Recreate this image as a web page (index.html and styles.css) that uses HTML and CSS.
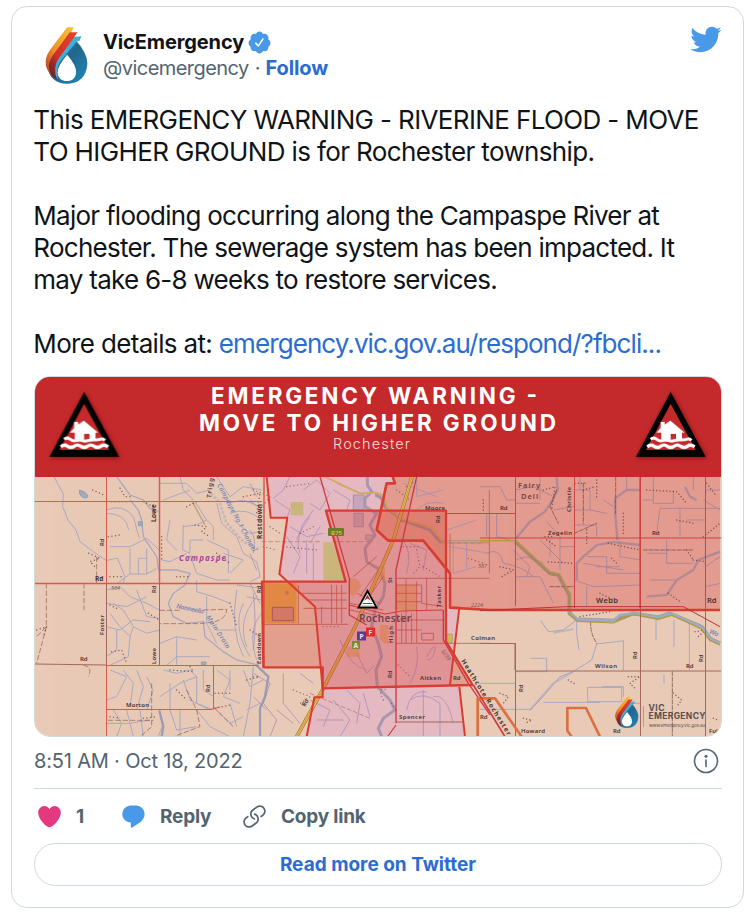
FILE: index.html
```html
<!DOCTYPE html>
<html lang="en">
<head>
<meta charset="utf-8">
<title>VicEmergency</title>
<link rel="stylesheet" href="styles.css">
</head>
<body>
<article class="card">
  <header class="head">
    <svg class="avatar" viewBox="130 72 145 185">
      <defs>
        <linearGradient id="blue" x1="0" y1="0" x2="1" y2="1"><stop offset="0" stop-color="#3ba5d0"/><stop offset=".45" stop-color="#23658c"/><stop offset="1" stop-color="#1c8abb"/></linearGradient>
        <linearGradient id="yel" x1="1" y1="0" x2="0" y2="1"><stop offset="0" stop-color="#f6c433"/><stop offset=".6" stop-color="#ef8f2c"/><stop offset="1" stop-color="#a8391f"/></linearGradient>
        <linearGradient id="red" x1="1" y1="0" x2="0" y2="1"><stop offset="0" stop-color="#e7442c"/><stop offset=".6" stop-color="#cf3027"/><stop offset="1" stop-color="#4b2130"/></linearGradient>
        <symbol id="drop" viewBox="130 72 145 185">
          <path fill="url(#blue)" d="M229 120Q264 158 264 190C262 232 237 251 202 251C168 251 146 230 146 202L185 140Z"/>
          <path fill="#42add8" d="M219 110L246 108L240 122L232 124L192 172Q166 196 175 238Q154 215 160 184Z"/>
          <path fill="url(#yel)" d="M203 81H223L216 95L168 162Q149 190 156 228Q138 208 138 186Q138 168 152 148Z"/>
          <path fill="url(#red)" d="M211 96H234L226 108L178 174Q159 200 172 240Q148 226 148 198Q148 182 160 165Z"/>
          <path fill="#fff" d="M203 164Q232 198 230 218C228 235 218 243 202 243S176 235 174 218Q173 199 203 164Z"/>
        </symbol>
        <symbol id="flood" viewBox="0 0 210 200">
          <path d="M104 2L209 197H0Z"/>
          <path fill="#c4292b" d="M104 38L179 176H30Z"/>
          <path fill="#fff" d="M61 124L74 111V92H86V100L103 88L146 124H138V145H120V128H104V145H76V124Z"/>
          <path fill="none" stroke="#fff" stroke-width="9" d="M44 144q9-7 18 0t18 4 18 0 18 0 18-2 18-2 14 4"/>
          <path fill="none" stroke="#fff" stroke-width="10" d="M34 167q10-9 20-2t20 0 20 0 20 0 20 0 20 0 22 2"/>
        </symbol>
      </defs>
      <use href="#drop" x="130" y="72" width="145" height="185"/>
    </svg>
    <div class="who">
      <div class="name"><b>VicEmergency</b><svg class="badge" viewBox="0 0 24 24"><path d="M22.5 12.5c0-1.58-.875-2.95-2.148-3.6.154-.435.238-.905.238-1.4 0-2.21-1.71-3.998-3.818-3.998-.47 0-.92.084-1.336.25C14.818 2.415 13.51 1.5 12 1.5s-2.816.917-3.437 2.25c-.415-.165-.866-.25-1.336-.25-2.11 0-3.818 1.79-3.818 4 0 .494.083.964.237 1.4-1.272.65-2.147 2.018-2.147 3.6 0 1.495.782 2.798 1.942 3.486-.02.17-.032.34-.032.514 0 2.21 1.708 4 3.818 4 .47 0 .92-.086 1.335-.25.62 1.334 1.926 2.25 3.437 2.25 1.512 0 2.818-.916 3.437-2.25.415.163.865.248 1.336.248 2.11 0 3.818-1.79 3.818-4 0-.174-.012-.344-.033-.513 1.158-.687 1.943-1.99 1.943-3.484zm-6.616-3.334l-4.334 6.5c-.145.217-.382.334-.625.334-.143 0-.288-.04-.416-.126l-.115-.094-2.415-2.415c-.293-.293-.293-.768 0-1.06s.768-.294 1.06 0l1.77 1.767 3.825-5.74c.23-.345.696-.436 1.04-.207.346.23.44.696.21 1.04z"/></svg></div>
      <div class="handle"><span class="at">@vicemergency</span><span class="dot">·</span><b class="follow">Follow</b></div>
    </div>
    <svg class="bird" viewBox="0 0 24 24"><path d="M23.643 4.937c-.835.37-1.732.62-2.675.733.962-.576 1.7-1.49 2.048-2.578-.9.534-1.897.922-2.958 1.13-.85-.904-2.06-1.47-3.4-1.47-2.572 0-4.658 2.086-4.658 4.66 0 .364.042.718.12 1.06-3.873-.195-7.304-2.05-9.602-4.868-.4.69-.63 1.49-.63 2.342 0 1.616.823 3.043 2.072 3.878-.764-.025-1.482-.234-2.11-.583v.06c0 2.257 1.605 4.14 3.737 4.568-.392.106-.803.162-1.227.162-.3 0-.593-.028-.877-.082.593 1.85 2.313 3.198 4.352 3.234-1.595 1.25-3.604 1.995-5.786 1.995-.376 0-.747-.022-1.112-.065 2.062 1.323 4.51 2.093 7.14 2.093 8.57 0 13.255-7.098 13.255-13.254 0-.2-.005-.402-.014-.602.91-.658 1.7-1.477 2.323-2.41z"/></svg>
  </header>

  <div class="text">
    <p><span class="l1">This EMERGENCY WARNING - RIVERINE FLOOD - MOVE</span><br><span class="l1">TO HIGHER GROUND is for Rochester township.</span></p>
    <p><span class="l3">Major flooding occurring along the Campaspe River at</span><br><span class="l3">Rochester. The sewerage system has been impacted. It</span><br><span class="l3">may take 6-8 weeks to restore services.</span></p>
    <p><span class="l6">More details at: </span><a class="l7">emergency.vic.gov.au/respond/?fbcli...</a></p>
  </div>

  <svg class="photo" viewBox="35 377 686 359">
    <rect x="35" y="377" width="686" height="359" fill="#e8cab7"/>

    <!-- shaded warning areas -->
    <g transform="translate(250 470) scale(.33333)">
      <path fill="#e5b9c2" d="M50 20L62 143H112L88 312L195 410L218 655V682H193L170 800H645L628 650L600 645L628 413H600V310L520 212H415L380 180L410 40H435L428 20Z"/>
      <path fill="#db3c3c" fill-opacity=".32" d="M428 20L435 40H410L380 180L415 212H520L600 310V413L720 420H1410V20Z"/>
      <path fill="#c3b46b" fill-opacity=".8" d="M122 96H160V136H122ZM220 217H247L287 330H220Z"/>
    </g>

    <!-- creeks, drains and farm tracks, west -->
    <g transform="translate(30 470) scale(.33333)" fill="none" stroke="#989fc3" stroke-width="3" opacity=".78">
      <path d="M72 20L100 72L98 110L114 150L138 180L150 215L190 245L229 272L262 264L285 320L280 340M229 120Q280 100 310 140L328 205M229 130Q290 130 296 180M240 230H300L350 205L388 240M300 235V312H350V235M325 265V310M325 265H350M300 312L262 340M350 312L380 296"/>
      <path d="M260 20L300 75L340 90L360 115L385 125M300 90L325 120L335 150L340 200L380 260L386 300L440 300L480 310L465 345L430 370L415 400L430 440L470 460L520 455L525 500L580 545L620 570L688 586" stroke-width="4"/>
      <path d="M390 40H470L500 70L540 60M400 90L480 60M450 20L460 60L490 90M460 165L458 240L480 250V210L520 210M495 95L530 150L500 165L460 170M530 150L550 170V210M560 100L575 160L620 200L640 250L680 275L690 320L660 335M590 100L640 90L690 110M600 130Q650 110 695 150M610 150L660 190L695 185M560 20L600 80L640 50L695 60M470 250L420 275L395 270M480 255L500 310L560 330H600M580 250L640 270L600 310M500 330V365L550 380L600 400M530 210L595 240V310M420 150L410 210L440 240"/>
      <path d="M229 360L270 350L300 380L350 400L388 420M229 400L290 410L350 380M240 430L270 470L300 500L310 470L280 420L250 400M229 470L270 480L310 450L360 455M310 470L350 490L388 480M300 500L295 560L240 586M260 480V540L229 560M320 360L350 440L388 445M390 520L440 500L500 510M410 586L440 560H540M440 500V586M530 380V460L560 520M560 480H620M620 360Q600 480 640 560M640 400Q605 470 660 560M680 380Q620 450 650 530M695 430Q650 480 680 570M620 345L695 355M650 380L695 390"/>
      <path d="M240 600L290 620L260 680L229 690M280 600L310 640L300 710M320 600L340 650L320 720M350 620L370 660L350 720M250 720L275 760L260 800M290 720L310 800M330 720L340 800M388 720L400 760L385 800M400 600L440 610L480 600L500 620L450 640L390 680M420 640V720M460 630L480 690L540 720M500 620V700L551 720M520 600V660L551 680M560 600L600 630L580 680L630 700M600 600V660M640 600L660 650L700 630M670 590L660 700L640 800M690 700L650 720M500 720L540 770L600 800M420 720L440 780L500 770M560 720L600 760L640 740M229 760H300L360 750M450 720V800M600 700L620 770" stroke-width="3"/>
      <path stroke="#8990b5" stroke-width="7" d="M388 722L400 770L395 800M680 586L715 620L705 680L690 715V800"/>
      <path stroke="#6c82c0" stroke-width="8" stroke-dasharray="8 5" d="M535 60L570 100L590 160L640 215L690 240" opacity=".35"/>
      <path fill="#8fa3b9" stroke="#7f93b0" d="M148 60Q170 65 174 80Q165 90 150 75ZM325 155h12v12h-12ZM514 576h14v8h-14Z"/>
      <path stroke="#a8763d" stroke-width="4" d="M485 92L525 165" opacity=".7"/>
    </g>
    <g transform="translate(30 470) scale(.33333)" fill="none" stroke="#8c5141" stroke-width="2.5" stroke-dasharray="16 6" opacity=".75">
      <path d="M49 340V470L20 500M49 470L20 580M162 340V420M389 421H450M520 420L590 418Q590 445 555 455L510 461H389M200 260V340M160 586Q190 590 175 620M365 640V770L330 800M470 660L500 720L510 770L430 800M551 712L610 770M234 751H370"/>
    </g>
    <!-- homesteads -->
    <g transform="translate(30 470) scale(.33333)" fill="none" stroke="#6b3d30" stroke-width="4.5" stroke-linecap="round" stroke-dasharray="0 11" opacity=".75">
      <path d="M245 95H300M188 60L222 75M176 250L210 265L180 275L200 295M235 200L270 195M270 55L285 80L305 80M240 320H280M245 545L275 540L290 580M340 95L370 110L378 150M355 430L388 450M395 200V270M420 600L490 605L480 590M440 320H480M495 165L530 170L515 185L540 200M20 480L50 470L40 500M560 250L600 280M600 400L620 470M555 670L610 670M555 715L600 705M240 740L270 745M340 745L380 740M650 630L690 620M640 80L690 70L680 130M660 480L690 500M440 660L470 690M240 405L260 415M470 110L500 95"/>
    </g>

    <!-- east side features -->
    <g transform="translate(480 470) scale(.33333)" fill="none" stroke="#a2809a" stroke-width="3" opacity=".8">
      <path stroke-width="7" stroke="#a68494" d="M230 20L233 60L215 95L195 125L150 155L108 205M480 60H440L405 85V120L412 210M480 225L400 216L350 225L310 260L290 280V330M500 380L560 375L590 330L640 300L655 270L720 245M615 50L630 80L650 90"/>
      <path d="M0 50H60L80 90H106M20 130V200M50 130V200L90 210M106 60L160 50L220 80M106 100H180M180 20V90M220 120L280 110M200 155L240 200M283 60H330V120L380 130M300 20V60M330 120H283M370 90L400 110M320 260H380V310M310 280L430 300M283 165H350V200M380 310H480M420 216V260L480 270M440 60V20M520 20V100H580V60M540 115H600V200M540 115L530 190M600 115H720M620 150H676M676 60H720M490 90H520M560 210V280H640M500 250H560M510 330H590M676 210V290L720 260M106 270L140 260L190 280M106 320H180L220 400M20 250Q60 230 70 280Q130 290 160 320M100 240L150 290L140 320M210 205V260M240 200V300M240 230H283M180 210L250 280M283 330L340 350L480 345M320 350V410M350 290H420M676 350L720 340M640 60V20M670 90L720 120"/>
      <path stroke="#94a0c5" d="M182 452L205 485L250 480L290 450V490L297 540M105 605H200V565H152M150 720L180 690L240 620L280 605L335 570L350 522L410 515L430 512V600M323 652H425V695H323ZM365 650H430V680M528 440V510M582 450V530M628 455V600M552 615V640M0 640H105M0 718H150M190 697H360M440 700H480M490 710V760"/>
      <path stroke="#94a0c5" stroke-width="6" d="M220 488L280 478M150 720L220 640L280 605" opacity=".6"/>
    </g>
    <g transform="translate(480 470) scale(.33333)" fill="none" stroke="#633a35" stroke-width="4.5" stroke-linecap="round" stroke-dasharray="0 10" opacity=".75">
      <path d="M190 60L225 50L215 120M10 90V130M200 210L230 230M195 200H220M285 40H320M320 180V230M385 220L480 240M310 60L345 50M395 265L415 285M60 290L100 300L65 320M205 275L275 280M430 130V200M350 30V90M500 60L590 65L620 100M590 150L640 160M680 40L710 80M670 200L720 160M565 370L600 395M640 270L676 275M360 370L400 390M445 620H480L450 640L470 660M130 745L155 750L135 760M265 630L290 645M580 670L605 690L590 710M60 670L85 680L70 700M645 485L676 480L655 500M700 745L715 750M620 240L640 270M300 440L390 425"/>
      <path stroke-width="2.5" stroke-dasharray="12 5" d="M577 605V800M332 455Q330 490 350 520M310 40V160M407 20V130M283 190L350 160M490 240H640M210 350H280M230 60L210 110L235 160"/>
    </g>

    <!-- Rochester township features -->
    <g transform="translate(250 470) scale(.33333)" fill="none" stroke="#a08bb5" stroke-width="3" opacity=".72">
      <path d="M120 20L100 60L70 85M75 90L120 120L112 140M160 60L200 30L240 70L210 120L180 100M190 120L160 160L140 210M180 140Q130 200 150 250M120 170L170 200L220 190M110 200L150 260L130 310M170 210V310M190 220V330M210 170L180 220M250 60L300 90L290 120M260 40L330 70M0 40L20 80M0 90L20 110M0 180Q20 200 10 250M0 250L20 300M0 340L30 400M10 370Q20 460 10 540M180 690L240 720L220 770M250 690L300 750L270 800M290 660L330 700L320 760M340 670L360 740M200 750H280M520 660V800M480 690Q520 660 570 700V800M550 680Q590 670 610 760M470 720Q480 660 530 665M450 200Q490 240 470 310M480 220L530 240L520 300M530 560Q560 510 555 540T530 570M500 530Q510 590 480 640M270 510Q300 590 350 600M320 550L350 610L370 590M10 610L60 640L40 700L80 750L60 800M100 610V700L150 760M150 610L190 640M10 680L50 720M80 720L130 760M500 120Q530 90 580 100M460 40L560 80M500 20V80L580 60M590 180L680 150M610 220V310L680 290M650 220V300M600 230L720 250"/>
      <path stroke="#948ba8" stroke-width="9" d="M352 20V45L365 65L345 85V110L380 130L360 165L375 195L345 235L350 275L390 300L405 340L400 380L375 420L365 470L385 520L395 560L378 600L382 650L420 690L435 720L400 745L385 775L395 800"/>
      <path stroke="#8d8196" stroke-width="9" d="M375 75Q400 80 405 110L455 150L540 180L570 215H720"/>
      <path stroke="#d0a338" stroke-width="5" d="M225 20L330 70L380 68Q410 75 410 110L450 145L545 172L578 215H720"/>
      <path stroke="#8e84a2" fill="#b7a0b8" d="M310 75H342V120H310ZM312 130H340V170H312ZM347 195h20v15h-20Z"/>
      <path stroke="#b27869" stroke-dasharray="14 6" d="M35 215H210M247 215H370M180 670L360 745M600 220H700"/>
    </g>

    <!-- local streets -->
    <g transform="translate(250 470) scale(.33333)">
      <path fill="#e6a33c" fill-opacity=".85" d="M40 340H140V460H40Z"/>
      <path fill="#dd9440" fill-opacity=".5" d="M298 325Q330 320 333 350L310 380L298 370ZM438 345H500V420H438ZM290 530L325 525L330 560H290ZM385 290H405V330H385ZM390 465H415V525L390 510Z"/>
      <path fill="#d0937e" stroke="#94656c" stroke-width="3" d="M67 412H130V452H67Z"/><circle cx="111" cy="368" r="6" fill="#c08a5c"/>
      <path fill="none" stroke="#bd5f53" stroke-width="2.5" d="M145 345V460M145 370H290M170 390H290M160 415H290M245 345V460M260 345V460M275 345V460M215 410V460M40 463H295M300 400L400 420M320 370L390 400M440 335V420M468 325V520M500 335V520M438 345H515M438 370H515M438 395H515M455 430V520M485 430V520M440 450H580M440 480H515M515 490H550V510H515ZM438 325H720M438 520H720M310 320L380 260M330 380L385 300M350 390L400 320M515 345V400L580 410M300 420L400 440M530 325V420M600 190V310M718 60V310"/>
      <path fill="none" stroke="#673f39" stroke-width="4" stroke-linecap="round" stroke-dasharray="0 11" opacity=".7" d="M10 60L60 80L20 130M60 170L90 190M40 230L80 240M110 50L180 40M500 240L510 290L490 310M460 230H510M220 470H270M440 60L480 90M520 290L570 320M445 585L480 620M400 690Q380 650 410 660M10 620H30M130 660L180 680L150 700M470 50L500 30M655 265L700 280M425 700L440 720M590 500h18M100 230L200 240M190 170L150 190"/>
      <path fill="#c9bb5b" stroke="#857632" d="M590 492h17v25h-17Z"/>
    </g>

    <!-- waterway south of Webb Rd -->
    <g transform="translate(480 470) scale(.33333)" fill="none" stroke-linejoin="round">
      <path stroke="#8c7466" stroke-width="11" opacity=".65" d="M106 215L210 310L235 315L268 375V430L290 448L400 452L460 430L535 442L570 430L665 470L690 505L720 520"/>
      <path stroke="#9baebb" stroke-width="8" d="M265 420L290 448L400 452L420 435L460 430L535 442L570 430L665 470L690 505L720 520"/>
      <path stroke="#b5993c" stroke-width="3.5" d="M0 212H106L210 305L240 312L270 375V432L292 454L400 459L460 434L535 448L575 436L665 478L690 512L720 525"/>
    </g>

    <!-- roads -->
    <g fill="none" stroke="#df584e" stroke-width="1">
      <path d="M35 501.500H262M106.500 477V583M106.500 666V736M106.500 709.500H211L220 707M213.500 666V709M106.500 665.500H258"/>
      <path stroke-width="1.500" d="M159.500 477V583M35 583.500H262M264 477V668"/>
      <path stroke="#a4675d" d="M106.500 583V666M159.500 583V666M35 664L106 665M640.500 608V736M515.500 643V736M480 643.500H515V670M515 671H721M705.500 608V736M396 722H463"/>
      <path stroke="#ca4544" d="M446 513.500H515M515.500 477V606M480 538H721M574.500 477V608M705.500 477V608M640.500 477V608"/>
      <path stroke="#d13d40" stroke-width="1.200" d="M640 477V608M396 725L388 736M349 605L385 614L402 611L443 610"/>
    </g>
    <g transform="translate(250 470) scale(.33333)" fill="none" stroke-linejoin="round">
      <path stroke="#a0703f" stroke-width="11" d="M486 20L430 210L318 465L220 655L140 800"/>
      <path stroke="#ecc052" stroke-width="7" d="M486 20L430 210L318 465L220 655L140 800"/>
      <path stroke="#b07a40" stroke-width="1.500" d="M486 20L430 210L318 465L220 655L140 800"/>
      <path fill="#d33a30" fill-opacity=".3" d="M228 122H588V515L668 645L218 655V592H40L36 335H287Z"/>
      <path stroke="#d93c31" stroke-width="7" d="M228 122H588V515L668 645L218 655V592H40L36 335H287Z"/>
      <path stroke="#d93c31" stroke-width="6" d="M50 20L62 143H112L88 312L195 410L218 655V682H193L170 800M645 800L628 650M600 645L628 413H600"/>
      <path stroke="#d93c31" stroke-width="8" d="M428 20L435 40H410L380 180L415 212H520L600 310V413L720 420H1410"/>
      <path stroke="#ce3940" stroke-width="4" d="M210 20L298 325V435L350 465M580 420V510L655 640L720 735M500 20L438 300V760"/>
      <path stroke="#bf2e35" stroke-width="3" d="M690 422L950 410H1300L1410 470"/>
      <path stroke="#dc7040" stroke-width="8" d="M683 800V685H735L815 800"/>
      <path stroke="#ce3940" stroke-width="5" d="M670 645L765 800"/>
      <path stroke="#dc7040" stroke-width="8" d="M965 800L952 782V714H1008L1050 800"/>
    </g>

    <!-- place and road names -->
    <g class="maplabels">
      <text x="179" y="561" textLength="47" class="shire">Campaspe</text>
      <text x="359" y="621.500" textLength="52" class="town">Rochester</text>
      <text x="518" y="488" textLength="22" class="mid">Fairy</text>
      <text x="521" y="498.500" textLength="17" class="mid">Dell</text>
      <text x="596" y="602.500" textLength="22" class="big">Webb</text>
      <text x="707" y="602.500" class="big">Rd</text>
      <text x="548" y="535" textLength="24">Zegelin</text><text x="652" y="535">Rd</text>
      <text x="500" y="510">Rd</text><text x="425" y="510" textLength="20">Moore</text>
      <text x="471" y="640" textLength="24">Colman</text><text x="595" y="668" textLength="22">Wilson</text><text x="686" y="668">Rd</text>
      <text x="420" y="680" textLength="21">Aitken</text><text x="453" y="680">Rd</text>
      <text x="399" y="719" textLength="26">Spencer</text><text x="480" y="719">Rd</text>
      <text x="521" y="733" textLength="24">Howard</text><text x="613" y="733">Rd</text><text x="709" y="733">Ful</text>
      <text x="126" y="707" textLength="23">Morton</text><text x="80" y="661">Rd</text><text x="95" y="580.500" class="b">Rd</text>
      <text x="111" y="590" class="num">584</text><text x="471" y="607" class="num">2224</text><text x="478" y="568" class="num">567</text>
      <text transform="translate(155.500 522) rotate(-90)" textLength="18" class="b">Lowe</text>
      <text transform="translate(155.500 593) rotate(-90)">Rd</text><text transform="translate(155.500 664) rotate(-90)" textLength="16">Lowe</text>
      <text transform="translate(103.500 546) rotate(-90)">Rd</text><text transform="translate(103.500 635) rotate(-90)" textLength="20">Foster</text>
      <text transform="translate(261.500 539) rotate(-90)" textLength="35" class="b">Restdown</text>
      <text transform="translate(261 593) rotate(-90)">Rd</text><text transform="translate(261 664) rotate(-90)" textLength="31">Eastdown</text>
      <text transform="translate(211 498) rotate(-83)" textLength="20">Trigg</text><text transform="translate(209.500 692) rotate(-90)">Rd</text>
      <text transform="translate(571 512) rotate(-90)" textLength="25">Christie</text><text transform="translate(440 523) rotate(-90)">Rd</text>
      <text transform="translate(440.500 607) rotate(-90)" textLength="21">Tasker</text><text transform="translate(392 583) rotate(-90)">St</text>
      <text transform="translate(392.500 643) rotate(-90)" textLength="17">High</text><text transform="translate(392 678) rotate(-90)">Rd</text>
      <text transform="translate(637 659) rotate(-90)">Rd</text><text transform="translate(702.500 662) rotate(-90)">Rd</text>
      <text transform="translate(523 692) rotate(-90)">Rd</text><text transform="translate(305 707) rotate(-60)">Rd</text>
      <text transform="translate(461 661) rotate(58)" textLength="88" class="b">Heathcote Rochester</text>
      <text transform="translate(441 651) rotate(55)" class="num">5299</text>
      <text transform="translate(176 608) rotate(12)" class="water" textLength="28">Nanneella</text>
      <text transform="translate(206 617) rotate(57)" class="water" textLength="38">Main Drain</text>
      <text transform="translate(709 633) rotate(24)" class="water">Wa</text>
      <text transform="translate(217 485) rotate(62)" class="water" textLength="76">Campaspe No 1 Channel</text>
    </g>
    <rect x="328" y="528" width="16" height="8" rx="1" fill="#6d7a28"/><text x="331" y="534.500" class="shield">B75</text>
    <g class="poi"><rect x="366" y="627.500" width="9" height="9" fill="#e12b2b"/><rect x="357" y="631.500" width="9" height="9" fill="#5b3c91"/><rect x="352" y="641" width="8" height="8" fill="#7f8c2e"/>
      <text x="368.500" y="634.700">F</text><text x="359.500" y="638.700">P</text><text x="353.500" y="647.700">A</text></g>
    <path d="M367.500 589L378 608.500H357Z"/><path fill="#fff" d="M367.500 593L375 606.500H360Z"/><path fill="#b02a2f" d="M367.500 594.500L373.500 605.500H361.500Z"/><path fill="#fff" d="M363.500 602V601L367.500 598.500L371.500 601V602H372.500V603H362.500V602ZM362 604H373V605.500H362Z"/>

    <!-- brand mark -->
    <use href="#drop" x="612.500" y="695" width="29" height="34"/>
    <path stroke="#b79d96" d="M643.500 706V727"/>
    <g fill="#57504f"><text x="648.500" y="711" class="brand" textLength="16">VIC</text><text x="648.500" y="719" class="brand" textLength="57">EMERGENCY</text><text x="649" y="727" class="url" textLength="56">www.emergency.vic.gov.au</text></g>

    <!-- banner -->
    <rect x="35" y="377" width="686" height="100" fill="#c4292b"/>
    <g class="shadow"><use href="#flood" x="49.500" y="391" width="70" height="67"/><use href="#flood" x="636" y="391" width="70" height="67"/></g>
    <g class="banner"><text x="211" y="404" textLength="326" lengthAdjust="spacing">EMERGENCY WARNING -</text><text x="199" y="431" textLength="357" lengthAdjust="spacing">MOVE TO HIGHER GROUND</text></g>
    <text x="333" y="449" textLength="77" class="sub">Rochester</text>
  </svg>

  <div class="meta"><span class="date">8:51 AM · Oct 18, 2022</span>
    <svg class="info" viewBox="0 0 26 26"><circle cx="13" cy="13" r="11.500"/><path d="M13 12V18.500"/><circle class="fill" cx="13" cy="8.200" r="1.500"/></svg></div>

  <div class="actions">
    <svg class="heart" viewBox="0 0 24 24"><path d="M12 21.638h-.014C9.403 21.59 1.95 14.856 1.95 8.478c0-3.064 2.525-5.754 5.403-5.754 2.29 0 3.83 1.58 4.646 2.73.814-1.148 2.354-2.73 4.645-2.73 2.88 0 5.404 2.69 5.404 5.755 0 6.376-7.454 13.11-10.037 13.157H12z"/></svg><b class="count">1</b>
    <svg class="bubble" viewBox="0 0 24 24"><path d="M14.046 2.242l-4.148-.01h-.002c-4.374 0-7.8 3.427-7.8 7.802 0 4.098 3.186 7.206 7.465 7.37v3.828c0 .108.044.286.12.403.142.225.384.347.632.347.138 0 .277-.038.402-.118.264-.168 6.473-4.14 8.088-5.506 1.902-1.61 3.04-3.97 3.043-6.312v-.017c-.006-4.367-3.43-7.787-7.8-7.788z"/></svg><b class="reply">Reply</b>
    <svg class="link" viewBox="0 0 24 24"><path d="M11.96 14.945c-.067 0-.136-.01-.203-.027-1.13-.318-2.097-.986-2.795-1.932-.832-1.125-1.176-2.508-.968-3.893s.942-2.605 2.068-3.438l3.53-2.608c2.322-1.716 5.61-1.224 7.33 1.1.83 1.127 1.175 2.51.967 3.895s-.943 2.605-2.07 3.438l-1.48 1.094c-.333.246-.804.175-1.05-.158-.246-.334-.176-.804.158-1.05l1.48-1.095c.803-.592 1.327-1.463 1.476-2.45.148-.988-.098-1.975-.69-2.778-1.225-1.656-3.572-2.01-5.23-.784l-3.53 2.608c-.802.593-1.326 1.464-1.475 2.45-.15.99.097 1.975.69 2.778.498.675 1.187 1.15 1.992 1.377.4.114.633.528.52.928-.092.33-.394.547-.722.547z"/><path d="M7.27 22.054c-1.61 0-3.197-.735-4.225-2.125-.832-1.127-1.176-2.51-.968-3.894s.943-2.605 2.07-3.438l1.478-1.094c.334-.245.805-.175 1.05.158s.177.804-.157 1.05l-1.48 1.095c-.803.593-1.326 1.464-1.475 2.45-.148.99.097 1.975.69 2.778 1.225 1.657 3.57 2.01 5.23.785l3.528-2.608c1.658-1.225 2.01-3.57.785-5.23-.498-.674-1.187-1.15-1.992-1.376-.4-.113-.633-.527-.52-.927.112-.4.528-.63.926-.522 1.13.318 2.096.986 2.794 1.932 1.717 2.324 1.224 5.612-1.1 7.33l-3.53 2.608c-.933.693-2.023 1.026-3.105 1.026z"/></svg><b class="copy">Copy link</b>
  </div>
  <a class="more"><span>Read more on Twitter</span></a>
</article>
</body>
</html>
```
FILE: styles.css
```css
* { box-sizing: border-box; }
body { margin: 0; background: #fff; font-family: Inter, "Liberation Sans", sans-serif; color: #0f1419; }
svg { display: block; flex: none; }
b { font-weight: 700; }

.card { width: 733px; height: 902px; margin: 6px 0 0 11px; padding: 16px 21px 0 22px; border: 1px solid #cfd9de; border-radius: 16px; }

.head { display: flex; height: 64px; }
.avatar { width: 48px; height: 62px; margin: 1px 0 0 9px; }
.who { margin-left: 12px; padding-top: 6px; font-size: 20px; line-height: 26px; }
.name, .handle { display: flex; align-items: center; height: 26px; white-space: nowrap; }
.name b { letter-spacing: -.12px; }
.badge { width: 25px; height: 25px; margin-left: 3px; fill: #4a99e9; }
.at, .dot { color: #536471; }
.at { letter-spacing: -.55px; }
.dot { margin: 0 5px 0 6px; }
.follow { color: #2b6cd3; letter-spacing: -.1px; }
.bird { width: 33px; height: 33px; margin-left: auto; fill: #4a99e9; }

.text { margin: 17px 0 0 -.7px; height: 272px; font-size: 26px; line-height: 32px; white-space: nowrap; }
.text p { margin: 0 0 32px; }
.text .l1 { letter-spacing: -.63px; }
.text .l3 { letter-spacing: -.74px; }
.text .l6 { letter-spacing: -.66px; }
.text .l7 { letter-spacing: -.92px; color: #2b6cd3; }

.photo { width: 688px; height: 361px; border: 1px solid #cfd9de; border-radius: 16px; overflow: hidden; }
.banner { font: 700 22.500px Inter, sans-serif; fill: #fff; }
.sub { font: 300 14.500px Inter, sans-serif; fill: #f8dcdc; }
.shadow { filter: drop-shadow(1px 1px 2px rgba(60, 0, 0, .55)); }
.maplabels { font: 600 6px "Noto Sans", sans-serif; fill: #493231; }
.maplabels .b { font-size: 6.500px; font-weight: 700; }
.maplabels .mid { font-size: 7.500px; font-weight: 600; fill: #70423d; }
.maplabels .big { font-size: 7.500px; }
.maplabels .town { font-size: 10px; font-weight: 600; fill: #743f49; }
.maplabels .shire { font-size: 8px; font-style: italic; font-weight: 700; fill: #aa46a2; }
.maplabels .num { font-size: 5.500px; font-style: italic; font-weight: 400; fill: #805850; }
.maplabels .water { font-size: 6.500px; font-style: italic; font-weight: 500; fill: #6a7eb2; }
.shield { font: 700 6px "Noto Sans", sans-serif; fill: #c9b84c; }
.poi text { font: 700 6.500px "Noto Sans", sans-serif; fill: #f4e4e4; }
.brand { font: 700 8.500px Inter, sans-serif; }
.url { font: 400 4.500px Inter, sans-serif; }

.meta { display: flex; justify-content: space-between; align-items: center; height: 52px; padding: 0 3.500px 3px 0; border-bottom: 1px solid #cfd9de; font-size: 20px; color: #536471; }
.date { letter-spacing: -.18px; }
.info { width: 26px; height: 26px; fill: none; stroke: #536471; stroke-width: 1.600; stroke-linecap: round; }
.info .fill { fill: #536471; stroke: none; }

.actions { display: flex; align-items: center; height: 54px; font-size: 19px; color: #536471; }
.heart, .bubble, .link { width: 27px; height: 27px; }
.heart { margin-left: 2px; fill: #e4397f; }
.count { width: 57px; padding-left: 13px; }
.bubble { fill: #4a99e9; }
.reply { margin-left: 13px; width: 81px; letter-spacing: -.2px; }
.link { fill: #536471; }
.copy { margin-left: 13px; letter-spacing: -.2px; }

.more { display: flex; align-items: center; justify-content: center; height: 43px; border: 1px solid #cfd9de; border-radius: 22px; font-size: 19px; font-weight: 700; color: #2b6cd3; }
.more span { letter-spacing: 0; }
```
